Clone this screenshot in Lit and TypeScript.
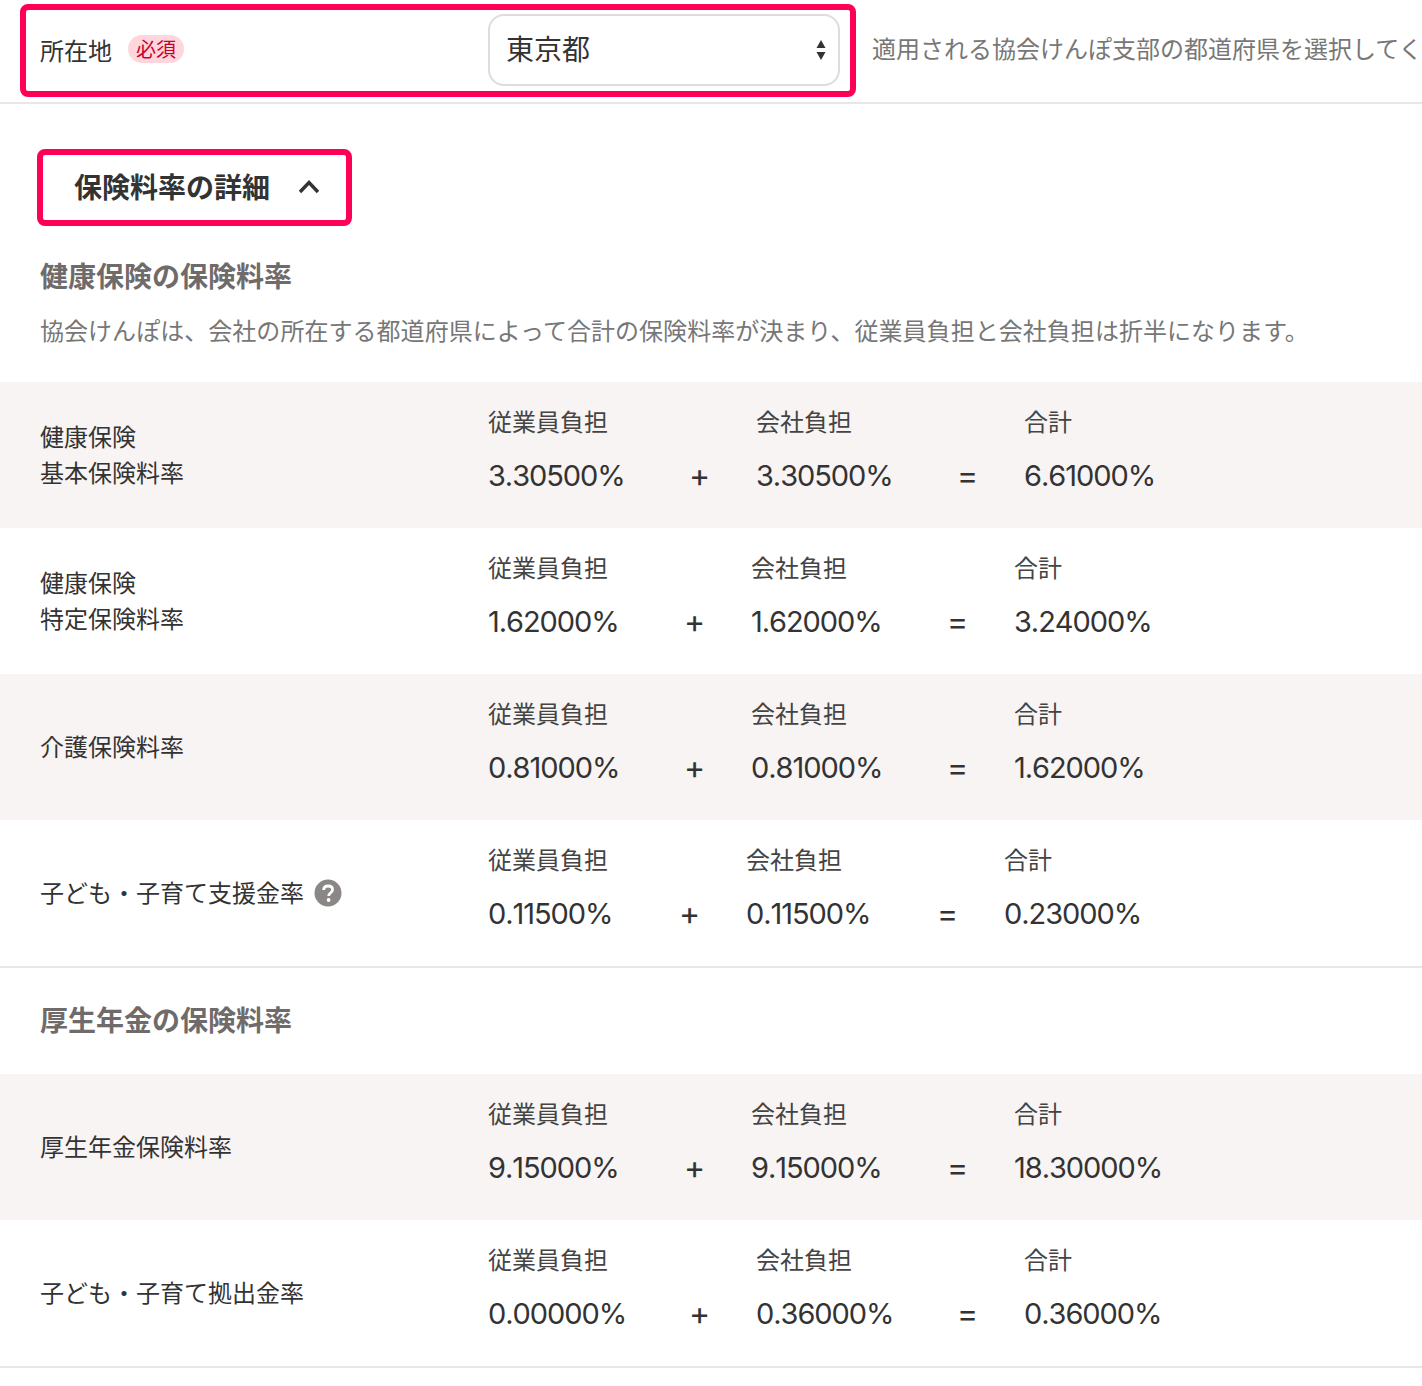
import { LitElement, html, css, svg } from "lit";
import { customElement } from "lit/decorators.js";
import { styleMap } from "lit/directives/style-map.js";

interface Row { label: string[]; a: string; b: string; c: string; help?: boolean; }

const health: Row[] = [
  { label: ["健康保険", "基本保険料率"], a: "3.30500%", b: "3.30500%", c: "6.61000%" },
  { label: ["健康保険", "特定保険料率"], a: "1.62000%", b: "1.62000%", c: "3.24000%" },
  { label: ["介護保険料率"], a: "0.81000%", b: "0.81000%", c: "1.62000%" },
  { label: ["子ども・子育て支援金率"], a: "0.11500%", b: "0.11500%", c: "0.23000%", help: true },
];
const pension: Row[] = [
  { label: ["厚生年金保険料率"], a: "9.15000%", b: "9.15000%", c: "18.30000%" },
  { label: ["子ども・子育て拠出金率"], a: "0.00000%", b: "0.36000%", c: "0.36000%" },
];

/** Column width derived from the value: digits are 19px, a "1" is 5px narrower. */
const termWidth = (v: string) =>
  `${136 + (v.length - 8) * 19 - 5 * (v.split("1").length - 1)}px`;

@customElement("app-root")
export class AppRoot extends LitElement {
  static styles = css`
    :host {
      display: block;
      width: 1422px;
      height: 1386px;
      overflow: hidden;
      background: #fff;
      color: #333;
      font-family: "Noto Sans CJK JP", sans-serif;
      font-size: 24px;
    }
    .top {
      display: flex;
      align-items: flex-start;
      height: 104px;
      box-sizing: border-box;
      padding: 4px 0 0 20px;
      border-bottom: 2px solid #e8e6e6;
      white-space: nowrap;
      overflow: hidden;
    }
    .field {
      flex: none;
      box-sizing: border-box;
      width: 836px;
      height: 93px;
      display: flex;
      align-items: center;
      border: 6px solid #ff0059;
      border-radius: 8px;
      padding: 0 10px 1px 14px;
    }
    .field-label {
      display: flex;
      align-items: center;
      gap: 16px;
      width: 448px;
      flex: none;
      margin-bottom: 2px;
    }
    .req {
      font-size: 20px;
      line-height: 28px;
      height: 28px;
      padding: 0 8px;
      border-radius: 14px;
      background: #ffd6dc;
      color: #c8002d;
    }
    .select-wrap {
      position: relative;
      flex: 1;
      display: flex;
    }
    select {
      appearance: none;
      -webkit-appearance: none;
      width: 100%;
      height: 72px;
      box-sizing: border-box;
      border: 2px solid #dedcdc;
      border-radius: 16px;
      background: #fff;
      color: #333;
      font: inherit;
      font-size: 28px;
      padding: 0 16px 4px;
    }
    .updown {
      position: absolute;
      right: 13px;
      top: 25px;
      width: 12px;
      height: 22px;
    }
    .help-text {
      margin-left: 16px;
      line-height: 88px;
      color: #777;
    }
    .toggle {
      display: inline-flex;
      align-items: center;
      box-sizing: border-box;
      margin: 45px 0 0 37px;
      width: 315px;
      height: 77px;
      padding: 0 0 4px 31px;
      border: 6px solid #ff0059;
      border-radius: 8px;
      font-size: 28px;
      font-weight: 700;
      gap: 27px;
    }
    .toggle svg { width: 24px; height: 16px; }
    h2 {
      margin: 0;
      padding: 0 40px;
      font-size: 28px;
      line-height: 40px;
      font-weight: 700;
      color: #6f6b6a;
    }
    .h-health { margin-top: 29px; }
    .desc {
      margin: 17px 0 34px;
      padding: 0 40px;
      line-height: 36px;
      color: #777;
      white-space: nowrap;
      letter-spacing: 0.04px;
    }
    .row {
      display: flex;
      align-items: center;
      height: 146px;
      padding-left: 40px;
    }
    .row:nth-child(odd) { background: #f7f4f3; }
    .label {
      flex: none;
      width: 448px;
      line-height: 36px;
      display: flex;
      align-items: center;
      gap: 10px;
      margin-top: -2px;
    }
    .terms {
      display: flex;
      align-items: flex-start;
      margin-top: -12px;
    }
    .term { flex: none; white-space: nowrap; }
    .term-h { line-height: 36px; color: #444; }
    .val {
      font-family: "Inter", "Noto Sans CJK JP", sans-serif;
      font-size: 29px;
      line-height: 38px;
      margin-top: 18px;
      letter-spacing: -1.05px;
      font-kerning: none;
    }
    .op {
      width: 18px;
      margin: 53px 49px 0 65px;
      font-family: "Inter", sans-serif;
      font-size: 32px;
      line-height: 40px;
      text-align: center;
    }
    .q {
      width: 28px;
      height: 28px;
      flex: none;
      margin-top: 2px;
    }
    .rows { display: block; }
    .rows-end { border-bottom: 2px solid #e8e6e6; }
    .h-pension { padding-top: 31px; padding-bottom: 35px; }
  `;

  private renderTerm(title: string, value: string) {
    return html`<div class="term" style=${styleMap({ width: termWidth(value) })}>
      <div class="term-h">${title}</div>
      <div class="val">${value}</div>
    </div>`;
  }

  private renderRow(r: Row) {
    return html`<div class="row">
      <div class="label">
        <span>${r.label.map((l, i) => (i ? html`<br />${l}` : l))}</span>
        ${r.help ? this.q() : ""}
      </div>
      <div class="terms">
        ${this.renderTerm("従業員負担", r.a)}
        <div class="op">+</div>
        ${this.renderTerm("会社負担", r.b)}
        <div class="op">=</div>
        ${this.renderTerm("合計", r.c)}
      </div>
    </div>`;
  }

  private q() {
    return html`<svg class="q" viewBox="0 0 28 28">
      <circle cx="14" cy="14" r="13.5" fill="#8b8786"></circle>
      ${svg`<path d="M9.6 11c.2-2.6 2-4 4.5-4 2.6 0 4.4 1.5 4.4 3.7 0 1.6-.8 2.5-2.2 3.5-1.2.8-1.6 1.4-1.6 2.8" fill="none" stroke="#fff" stroke-width="2.8"></path>
      <circle cx="14.6" cy="21" r="1.9" fill="#fff"></circle>`}
    </svg>`;
  }

  render() {
    return html`
      <div class="top">
        <div class="field">
          <div class="field-label"><span>所在地</span><span class="req">必須</span></div>
          <div class="select-wrap">
            <select><option>東京都</option></select>
            <svg class="updown" viewBox="0 0 12 22">
              <path d="M6 1 L10.5 9 H1.5 Z M6 21 L10.5 13 H1.5 Z" fill="#333"></path>
            </svg>
          </div>
        </div>
        <div class="help-text">適用される協会けんぽ支部の都道府県を選択してください。</div>
      </div>
      <div class="toggle">
        <span>保険料率の詳細</span>
        <svg viewBox="0 0 24 16"><path d="M3 14 L12 4.5 L21 14" fill="none" stroke="#333" stroke-width="3.4"></path></svg>
      </div>
      <h2 class="h-health">健康保険の保険料率</h2>
      <p class="desc">協会けんぽは、会社の所在する都道府県によって合計の保険料率が決まり、従業員負担と会社負担は折半になります。</p>
      <div class="rows rows-end">${health.map((r) => this.renderRow(r))}</div>
      <h2 class="h-pension">厚生年金の保険料率</h2>
      <div class="rows rows-end">${pension.map((r) => this.renderRow(r))}</div>
    `;
  }
}
